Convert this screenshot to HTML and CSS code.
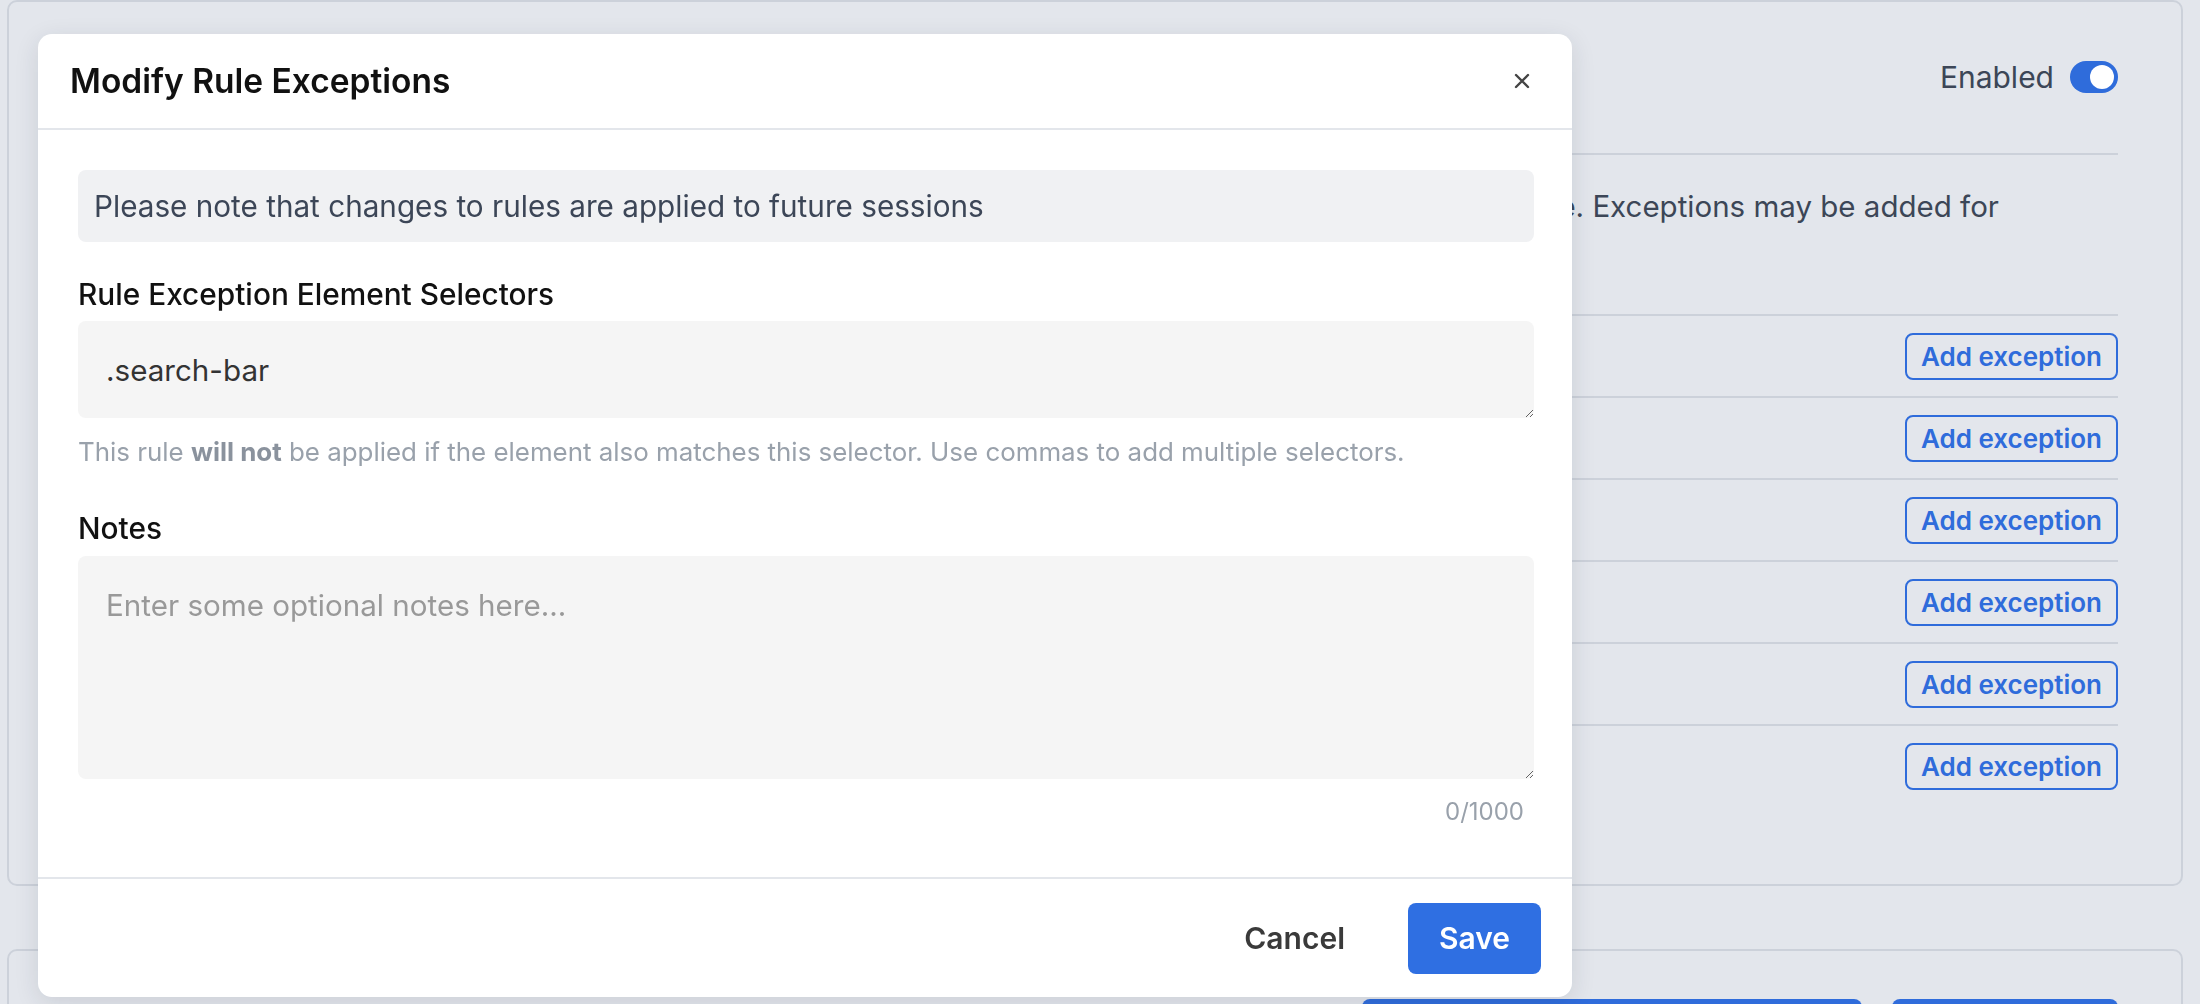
FILE: index.html
```
<!DOCTYPE html>
<html lang="en">
<head>
  <meta charset="UTF-8" />
  <meta name="viewport" content="width=device-width, initial-scale=1.0"/>
  <title>Privacy rules</title>
  <link rel="stylesheet" href="styles.css">
</head>
<body>
  <div class="page">
    <section class="card">
      <div class="card-head">
        <h2 class="card-title">Masking rules</h2>
        <label class="switch-wrap">
          <span>Enabled</span>
          <span class="switch"><span class="knob"></span></span>
        </label>
      </div>
      <p class="card-desc">Masking rules hide sensitive page content from session recordings before any data leaves the device. Exceptions may be added for<br>specific elements.</p>
      <div class="rules">
        <div class="rule-row"><span class="rule-name">Mask all text inputs</span><button class="btn-outline">Add exception</button></div>
        <div class="rule-row"><span class="rule-name">Mask password fields</span><button class="btn-outline">Add exception</button></div>
        <div class="rule-row"><span class="rule-name">Mask email addresses</span><button class="btn-outline">Add exception</button></div>
        <div class="rule-row"><span class="rule-name">Mask credit card numbers</span><button class="btn-outline">Add exception</button></div>
        <div class="rule-row"><span class="rule-name">Mask phone numbers</span><button class="btn-outline">Add exception</button></div>
        <div class="rule-row"><span class="rule-name">Mask images</span><button class="btn-outline">Add exception</button></div>
      </div>
    </section>

    <section class="card card-next">
      <div class="next-actions">
        <button class="btn-solid wide">Add custom rule</button>
        <button class="btn-solid">Import</button>
      </div>
    </section>
  </div>

  <div class="modal">
    <div class="modal-head">
      <h1 class="modal-title">Modify Rule Exceptions</h1>
      <button class="close" aria-label="Close">
        <svg width="16" height="16" viewBox="0 0 16 16"><path d="M2 2 L14 14 M14 2 L2 14" stroke="#444" stroke-width="2.4" stroke-linecap="round"/></svg>
      </button>
    </div>
    <div class="modal-body">
      <div class="notice">Please note that changes to rules are applied to future sessions</div>

      <label class="field-label" for="selectors">Rule Exception Element Selectors</label>
      <textarea id="selectors" class="field selectors">.search-bar</textarea>
      <p class="hint">This rule <b>will not</b> be applied if the element also matches this selector. Use commas to add multiple selectors.</p>

      <label class="field-label notes-label" for="notes">Notes</label>
      <textarea id="notes" class="field notes" placeholder="Enter some optional notes here..."></textarea>
      <div class="counter">0/1000</div>
    </div>
    <div class="modal-foot">
      <button class="btn-cancel">Cancel</button>
      <button class="btn-save">Save</button>
    </div>
  </div>
</body>
</html>
```

FILE: styles.css
```
body {
  margin: 0;
  background: #e3e6ec;
  font-family: Inter, "Liberation Sans", sans-serif;
  color: #3c4657;
  overflow: hidden;
}

.page {
  padding: 0 17px 0 7px;
}

.card {
  border: 2px solid #ccd1da;
  border-radius: 10px;
  background: #e3e6ec;
  padding: 0 63px 78px 157px;
}

.card-head {
  display: flex;
  justify-content: space-between;
  align-items: center;
  height: 32px;
  padding: 59px 0 60px;
  border-bottom: 2px solid #ccd1da;
}

.card-title {
  margin: 0;
  font-size: 32px;
  font-weight: 600;
  line-height: 32px;
}

.switch-wrap {
  display: flex;
  align-items: center;
  gap: 16px;
  font-size: 30px;
  line-height: 32px;
}

.switch {
  width: 48px;
  height: 32px;
  border-radius: 16px;
  background: #2f6cdb;
  display: flex;
  align-items: center;
  justify-content: flex-end;
  padding: 0 4px;
  box-sizing: border-box;
}

.knob {
  width: 24px;
  height: 24px;
  border-radius: 50%;
  background: #fff;
}

.card-desc {
  margin: 0;
  padding: 30px 0 45px;
  font-size: 29.5px;
  line-height: 42px;
  white-space: nowrap;
}

.rule-row {
  display: flex;
  justify-content: space-between;
  align-items: center;
  height: 80px;
  border-top: 2px solid #ccd1da;
  font-size: 28px;
}

.btn-outline {
  font-family: inherit;
  font-size: 26px;
  font-weight: 600;
  color: #2f6cdb;
  background: transparent;
  border: 2px solid #2f6cdb;
  border-radius: 8px;
  height: 47px;
  width: 213px;
  padding: 0;
}

.card-next {
  margin-top: 63px;
  padding: 48px 63px 40px 40px;
}

.next-actions {
  display: flex;
  justify-content: flex-end;
  gap: 30px;
}

.btn-solid {
  height: 50px;
  width: 226px;
  border: none;
  border-radius: 8px;
  background: #2f6cdb;
  color: #fff;
  font-family: inherit;
  font-size: 25px;
}

.btn-solid.wide {
  width: 500px;
}

/* modal dialog */
.modal {
  position: fixed;
  left: 38px;
  top: 34px;
  width: 1534px;
  height: 963px;
  background: #fff;
  border-radius: 14px;
  box-shadow: 0 6px 24px rgba(30, 40, 60, 0.12);
  display: flex;
  flex-direction: column;
  color: #111;
}

.modal-head {
  height: 94px;
  display: flex;
  align-items: center;
  justify-content: space-between;
  padding: 0 34px 0 32px;
  border-bottom: 2px solid #e3e6eb;
  flex-shrink: 0;
}

.modal-title {
  margin: 0;
  font-size: 33.5px;
  font-weight: 600;
  color: #111;
}

.close {
  background: none;
  border: none;
  padding: 8px;
  display: flex;
  cursor: pointer;
}

.modal-body {
  flex: 1;
  padding: 40px 38px 0 40px;
  display: flex;
  flex-direction: column;
}

.notice {
  height: 72px;
  display: flex;
  align-items: center;
  padding: 0 16px;
  background: #f0f1f3;
  border-radius: 8px;
  font-size: 29.7px;
  color: #3c4657;
}

.field-label {
  margin-top: 32px;
  font-size: 29.8px;
  line-height: 40px;
  font-weight: 500;
  color: #111;
}

.notes-label {
  margin-top: 38px;
}

.field {
  margin-top: 7px;
  font-family: inherit;
  font-size: 29.6px;
  line-height: 34px;
  color: #333;
  background: #f5f5f5;
  border: none;
  border-radius: 8px;
  padding: 32px 28px;
  box-sizing: border-box;
  resize: vertical;
  outline: none;
}

.field::placeholder {
  color: #999;
}

.selectors {
  height: 97px;
}

.notes {
  height: 223px;
  margin-top: 8px;
}

.hint {
  margin: 16px 0 0;
  font-size: 25.9px;
  line-height: 36px;
  color: #99a1ab;
}

.hint b {
  color: #8a929d;
  font-weight: 700;
}

.counter {
  margin-top: 18px;
  text-align: right;
  padding-right: 10px;
  font-size: 24px;
  line-height: 30px;
  color: #99a1ab;
}

.modal-foot {
  height: 118px;
  border-top: 2px solid #e3e6eb;
  display: flex;
  align-items: center;
  justify-content: flex-end;
  gap: 34px;
  padding-right: 31px;
  flex-shrink: 0;
}

.btn-cancel {
  background: none;
  border: none;
  font-family: inherit;
  font-size: 30px;
  font-weight: 600;
  color: #3a3a3a;
  padding: 0 29px;
  height: 71px;
}

.btn-save {
  width: 133px;
  height: 71px;
  border: none;
  border-radius: 8px;
  background: #2f6fe2;
  color: #fff;
  font-family: inherit;
  font-size: 30px;
  font-weight: 600;
}
```
